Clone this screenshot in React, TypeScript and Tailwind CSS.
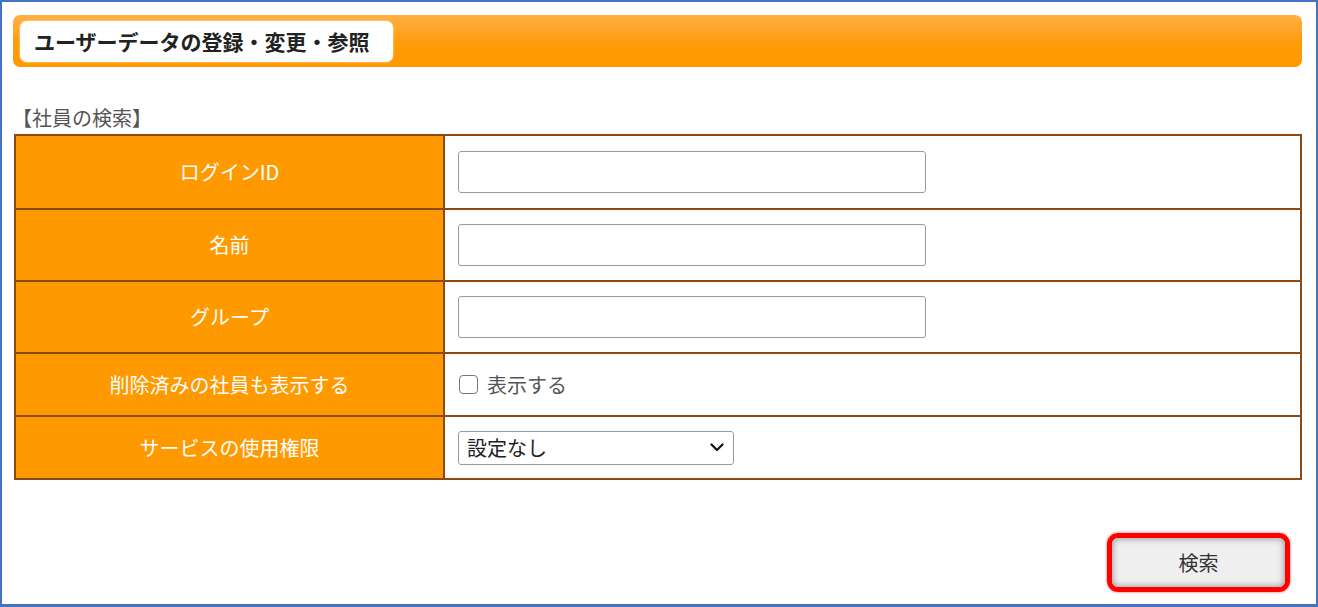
import React from "react";

const jp = "font-['Noto_Sans_CJK_JP','Noto_Sans',sans-serif]";

function Row({
  label,
  h,
  first,
  children,
}: {
  label: string;
  h: string;
  first?: boolean;
  children: React.ReactNode;
}) {
  return (
    <div className={`flex ${h} ${first ? "" : "border-t-2 border-[#8b4a16]"}`}>
      <div className="w-[429px] shrink-0 bg-[#ff9900] border-r-2 border-[#8b4a16] flex items-center justify-center text-white text-[20px] leading-none">
        {label}
      </div>
      <div className="flex-1 bg-white flex items-center pl-[13px]">{children}</div>
    </div>
  );
}

function TextBox() {
  return (
    <div className="w-[468px] h-[42px] border border-[#9a9a9a] rounded-[3px] bg-white" />
  );
}

export default function App() {
  return (
    <div
      className={`w-[1318px] h-[607px] bg-white border-2 border-b-[3px] border-[#4472c4] ${jp} flex flex-col`}
    >
      {/* Header bar */}
      <div className="ml-[11px] mt-[13px] w-[1289px] h-[52px] rounded-[7px] bg-linear-to-b from-[#ffb040] via-[#ff9c0a] to-[#ff9900] flex items-center pl-[7px]">
        <div className="w-[373px] h-[41px] bg-white rounded-[7px] flex items-center pl-[14px] shadow-[0_0_2px_rgba(255,255,255,0.9)]">
          <span className="text-[21px] font-bold text-[#222] leading-none">
            ユーザーデータの登録・変更・参照
          </span>
        </div>
      </div>

      {/* Section label */}
      <div className="ml-[10px] mt-[37px] h-[28px] flex items-center text-[20px] text-[#555] leading-none">
        【社員の検索】
      </div>

      {/* Table */}
      <div className="ml-[12px] mt-[2px] w-[1288px] border-2 border-[#8b4a16] flex flex-col">
        <Row label="ログインID" h="h-[72px]" first>
          <TextBox />
        </Row>
        <Row label="名前" h="h-[72px]">
          <TextBox />
        </Row>
        <Row label="グループ" h="h-[72px]">
          <TextBox />
        </Row>
        <Row label="削除済みの社員も表示する" h="h-[63px]">
          <div className="flex items-center">
            <div className="ml-[1px] w-[19px] h-[19px] border-[1.5px] border-[#777] rounded-[4px] bg-white" />
            <span className="ml-[9px] text-[20px] text-[#555] leading-none">表示する</span>
          </div>
        </Row>
        <Row label="サービスの使用権限" h="h-[63px]">
          <div className="w-[276px] h-[34px] border border-[#9a9a9a] rounded-[3px] bg-white flex items-center justify-between pl-[8px] pr-[9px]">
            <span className="text-[20px] text-[#222] leading-none">設定なし</span>
            <svg width="14" height="9" viewBox="0 0 14 9" fill="none">
              <path d="M1.5 1.5 L7 7 L12.5 1.5" stroke="#111" strokeWidth="2.2" strokeLinecap="round" strokeLinejoin="round" />
            </svg>
          </div>
        </Row>
      </div>

      {/* Button */}
      <div className="flex justify-end mr-[26px] mt-[53px]">
        <div className="w-[183px] h-[59px] border-[5px] border-[#ff0000] rounded-[11px] shadow-[0_0_3px_rgba(200,0,0,0.6)] overflow-hidden">
          <div className="w-full h-full bg-[#efefef] rounded-[5px] shadow-[inset_0_0_7px_rgba(0,0,0,0.45)] flex items-center justify-center text-[20px] text-[#333] leading-none">
            検索
          </div>
        </div>
      </div>
    </div>
  );
}
